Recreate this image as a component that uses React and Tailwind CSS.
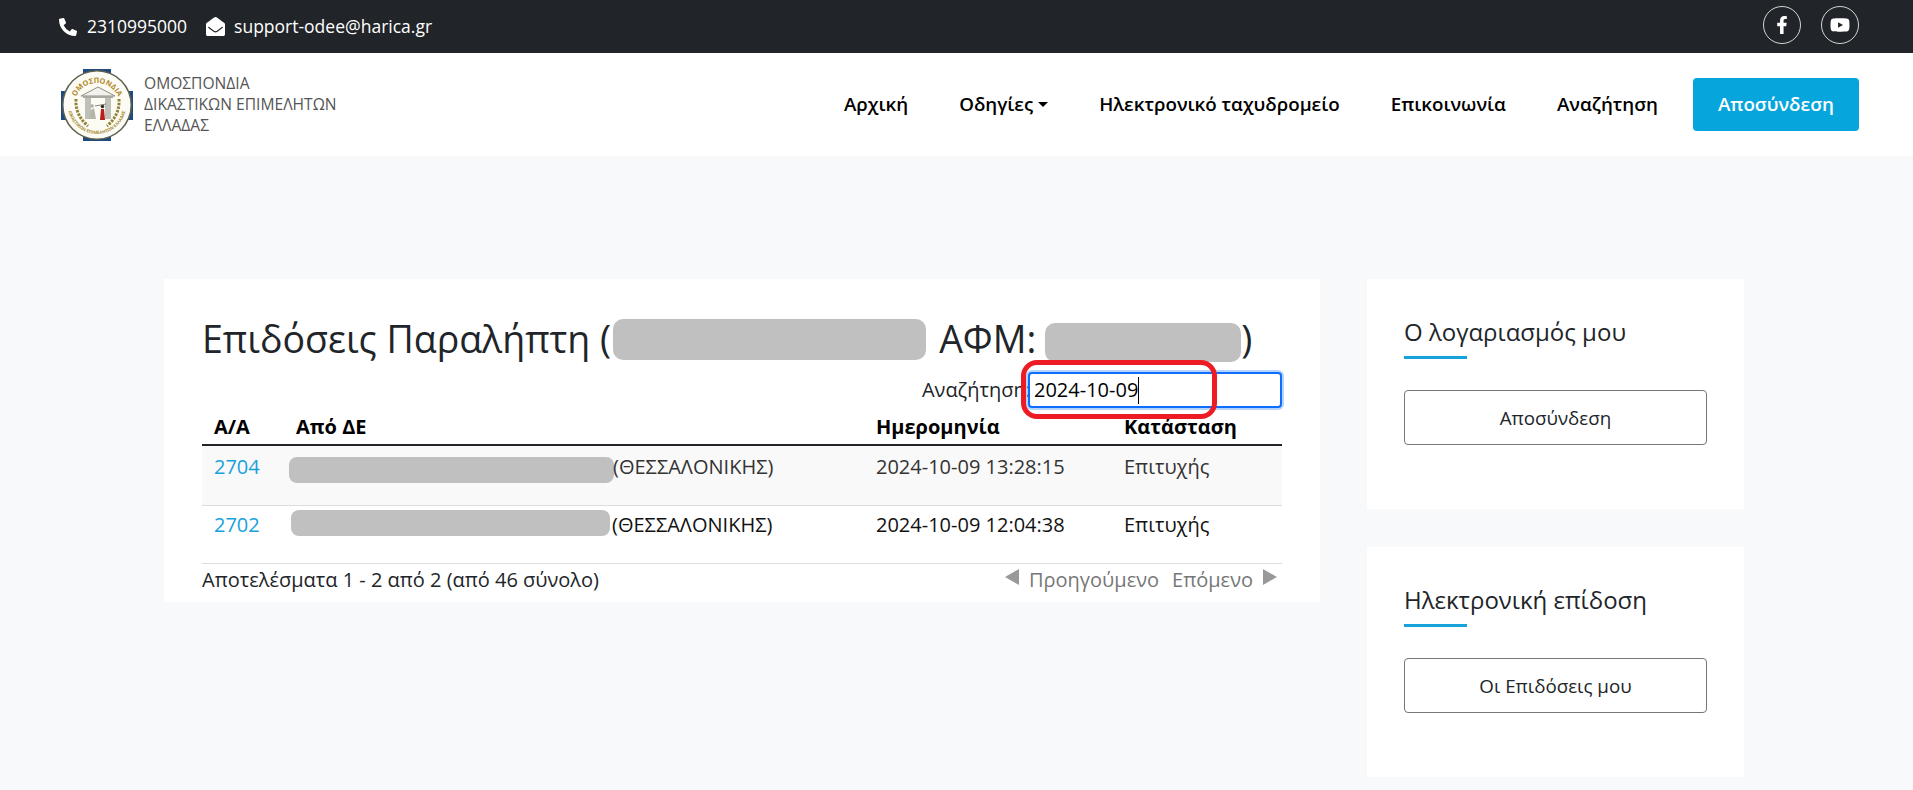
import React from 'react';
import { FaPhoneAlt, FaEnvelopeOpen, FaFacebookF, FaYoutube } from 'react-icons/fa';

const navItems = ['Αρχική', 'Οδηγίες', 'Ηλεκτρονικό ταχυδρομείο', 'Επικοινωνία', 'Αναζήτηση'];

const rows = [
  { id: '2704', date: '2024-10-09 13:28:15', blob: 'w-[325px] -ml-[7px] mt-[5px]', text: '-ml-[1px]', rowCls: 'h-[60px] bg-[#f9f9f9] text-[#333]', pad: 'pt-[6px]' },
  { id: '2702', date: '2024-10-09 12:04:38', blob: 'w-[319px] -ml-[5px] mt-[0px]', text: 'ml-[2px]', rowCls: 'h-[58px] text-[#111]', pad: 'pt-[4px]' },
];

// Seal of the federation, drawn by hand
const Logo = () => (
  <svg width="72" height="72" viewBox="0 0 72 72" className="shrink-0">
    <defs>
      <path id="sealTop" d="M13 37 A23 23 0 0 1 59 37" />
      <path id="sealBottom" d="M7 36 A29 29 0 0 0 65 36" />
    </defs>
    <rect x="22" y="0" width="28" height="72" fill="#1f4a80" />
    <rect x="0" y="22" width="72" height="29" fill="#1f4a80" />
    <circle cx="36" cy="36" r="35" fill="#5c6150" />
    <circle cx="36" cy="36" r="33.5" fill="#fdfcf4" />
    <text fontSize="7.4" fontWeight="700" fill="#b0892a" fontFamily="Open Sans, sans-serif" textAnchor="middle">
      <textPath href="#sealTop" startOffset="50%">ΟΜΟΣΠΟΝΔΙΑ</textPath>
    </text>
    <text fontSize="4.4" fontWeight="700" fill="#a68a35" fontFamily="Open Sans, sans-serif" textAnchor="middle">
      <textPath href="#sealBottom" startOffset="50%">ΔΙΚΑΣΤΙΚΩΝ ΕΠΙΜΕΛΗΤΩΝ ΕΛΛΑΔΑΣ</textPath>
    </text>
    <path d="M20 27 L37 18 L54 27 Z" fill="#f2f2ec" stroke="#8f8f85" strokeWidth="1" />
    <rect x="22" y="27" width="30" height="2" fill="#a9a9a0" />
    <rect x="24" y="29" width="6" height="21" fill="#c0c0ba" />
    <rect x="44" y="29" width="6" height="21" fill="#c0c0ba" />
    <path d="M28 50 L30 41 L33 39 L35 50 Z" fill="#b5b5aa" />
    <circle cx="31" cy="37" r="1.8" fill="#b0ada0" />
    <path d="M39 51 L40 40 L43 40 L44 51 Z" fill="#b91c1c" />
    <circle cx="41.5" cy="37.5" r="1.8" fill="#33302c" />
    <path d="M34 37 L45 35" stroke="#55524a" strokeWidth="0.7" />
    <path d="M15 30 Q14 46 27 57" fill="none" stroke="#8f8238" strokeWidth="3" strokeDasharray="2.5 1.2" />
    <path d="M58 30 Q59 46 46 57" fill="none" stroke="#8f8238" strokeWidth="3" strokeDasharray="2.5 1.2" />
  </svg>
);

const SideCard = ({ title, action }) => (
  <div className="bg-white px-[37px] pt-[38px] h-[230px]">
    <h3 className="text-[24px] leading-[29px] text-[#212529]">{title}</h3>
    <div className="mt-[10px] w-[63px] h-[3px] bg-[#17a2db]" />
    <button className="mt-[31px] w-full h-[55px] pt-[2px] border border-[#777] rounded-[4px] text-[18.75px] text-[#212529]">
      {action}
    </button>
  </div>
);

export default function App() {
  return (
    <div className="h-[790px] overflow-hidden bg-[#f8f9fa] text-[#212529] font-['Open_Sans',sans-serif]">
      {/* Top bar */}
      <div className="h-[53px] bg-[#212529] text-white flex items-center justify-between pl-[59px] pr-[54px]">
        <div className="flex items-center text-[17.5px]">
          <FaPhoneAlt size={18} />
          <span className="ml-[10px]">2310995000</span>
          <FaEnvelopeOpen size={19} className="ml-[19px]" />
          <span className="ml-[9px]">support-odee@harica.gr</span>
        </div>
        <div className="flex items-center gap-[20px] -mt-[3px]">
          <a className="w-[38px] h-[38px] rounded-full border border-white/80 flex items-center justify-center">
            <FaFacebookF size={18} />
          </a>
          <a className="w-[38px] h-[38px] rounded-full border border-white/80 flex items-center justify-center">
            <FaYoutube size={20} />
          </a>
        </div>
      </div>

      {/* Header */}
      <header className="h-[103px] bg-white flex items-center justify-between pl-[61px] pr-[54px]">
        <div className="flex items-center">
          <Logo />
          <div className="ml-[11px] text-[15.6px] leading-[21px] font-medium text-[#555]">
            <div>ΟΜΟΣΠΟΝΔΙΑ</div>
            <div>ΔΙΚΑΣΤΙΚΩΝ ΕΠΙΜΕΛΗΤΩΝ</div>
            <div>ΕΛΛΑΔΑΣ</div>
          </div>
        </div>
        <nav className="flex items-center gap-[51px] text-[18.75px] font-semibold text-black">
          {navItems.map((item) => (
            <a key={item} className="flex items-center">
              {item}
              {item === 'Οδηγίες' && (
                <span className="ml-[5px] border-x-[5px] border-x-transparent border-t-[5px] border-t-black" />
              )}
            </a>
          ))}
          <button className="-ml-[16px] w-[166px] h-[53px] rounded-[4px] bg-[#06a5dc] text-white">
            Αποσύνδεση
          </button>
        </nav>
      </header>

      {/* Content */}
      <main className="flex items-start gap-[47px] pt-[123px] pl-[164px]">
        <section className="relative w-[1156px] h-[323px] bg-white px-[38px] pt-[38px]">
          <h1 className="flex items-start h-[43px] text-[37.5px] leading-[43px] whitespace-nowrap">
            Επιδόσεις Παραλήπτη (
            <span className="ml-[2px] w-[313px] h-[41px] mt-[2px] rounded-[10px] bg-[#c0c0c0]" />
            <span className="ml-[13px]">ΑΦΜ:</span>
            <span className="ml-[9px] w-[196px] h-[39px] mt-[6px] rounded-[10px] bg-[#c0c0c0]" />
            <span>)</span>
          </h1>

          <div className="mt-[12px] flex items-center justify-end h-[36px] text-[20px]">
            <label className="-mr-[3px]">Αναζήτηση:</label>
            <div className="relative w-[254px] h-[36px] flex items-center pl-[4px] rounded-[4px] bg-white border-2 border-[#0d6efd] ring-2 ring-[#0d6efd]/30 text-[20px] text-black">
              2024-10-09
              <span className="w-px h-[27px] bg-black" />
            </div>
          </div>

          <table className="w-full table-fixed text-[20px] leading-[30px] -mt-px">
            <thead>
              <tr className="border-b-2 border-[#212529] text-left font-bold text-black">
                <th className="w-[82px] pl-[12px] pt-[5px] pb-[2px]">Α/Α</th>
                <th className="w-[580px] pl-[12px] pt-[5px] pb-[2px]">Από ΔΕ</th>
                <th className="w-[248px] pl-[12px] pt-[5px] pb-[2px]">Ημερομηνία</th>
                <th className="pl-[12px] pt-[5px] pb-[2px]">Κατάσταση</th>
              </tr>
            </thead>
            <tbody>
              {rows.map((row) => (
                <tr key={row.id} className={`border-b border-[#ddd] align-top ${row.rowCls}`}>
                  <td className={`pl-[12px] text-[#17a2db] ${row.pad}`}>{row.id}</td>
                  <td className={`pl-[12px] ${row.pad}`}>
                    <div className="flex items-start">
                      <span className={`h-[26px] rounded-[8px] bg-[#c0c0c0] shrink-0 ${row.blob}`} />
                      <span className={row.text}>(ΘΕΣΣΑΛΟΝΙΚΗΣ)</span>
                    </div>
                  </td>
                  <td className={`pl-[12px] ${row.pad}`}>{row.date}</td>
                  <td className={`pl-[12px] ${row.pad}`}>Επιτυχής</td>
                </tr>
              ))}
            </tbody>
          </table>

          <div className="mt-[1px] flex items-center justify-between text-[20px] leading-[30px]">
            <span>Αποτελέσματα 1 - 2 από 2 (από 46 σύνολο)</span>
            <div className="flex items-center text-[#777]">
              <span className="mb-[6px] mr-[10px] border-y-[8px] border-y-transparent border-r-[14px] border-r-[#999]" />
              <span>Προηγούμενο</span>
              <span className="ml-[13px]">Επόμενο</span>
              <span className="mb-[6px] ml-[10px] mr-[5px] border-y-[8px] border-y-transparent border-l-[14px] border-l-[#999]" />
            </div>
          </div>

          {/* Red marker drawn over the search box */}
          <div className="absolute left-[857px] top-[81px] w-[196px] h-[59px] rounded-[16px] border-[5px] border-[#ed1c24]" />
        </section>

        <aside className="w-[377px] flex flex-col gap-[38px]">
          <SideCard title="Ο λογαριασμός μου" action="Αποσύνδεση" />
          <SideCard title="Ηλεκτρονική επίδοση" action="Οι Επιδόσεις μου" />
        </aside>
      </main>
    </div>
  );
}
